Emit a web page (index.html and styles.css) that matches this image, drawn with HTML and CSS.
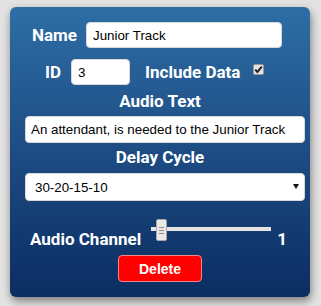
FILE: index.html
```html
<!DOCTYPE html>
<html>
<head>
<meta charset="utf-8">
<link rel="stylesheet" href="styles.css">
</head>
<body>
<div class="panel">
  <div class="row row-name">
    <span class="lbl">Name</span>
    <input class="field name-field" type="text" value="Junior Track">
  </div>
  <div class="row row-id">
    <span class="lbl">ID</span>
    <input class="field id-field" type="text" value="3">
    <span class="lbl include">Include Data</span>
    <span class="check"><svg width="9" height="9" viewBox="0 0 9 9"><path d="M1.2 4.6 L3.4 7 L7.8 1.6" fill="none" stroke="#222" stroke-width="2"/></svg></span>
  </div>
  <div class="lbl center t-audio">Audio Text</div>
  <input class="field wide" type="text" value="An attendant, is needed to the Junior Track">
  <div class="lbl center t-delay">Delay Cycle</div>
  <div class="select-wrap">
    <select class="field wide sel"><option>30-20-15-10</option></select>
    <svg class="arrow" width="6" height="5" viewBox="0 0 6 5"><path d="M0 0 H6 L3 5 Z" fill="#111"/></svg>
  </div>
  <div class="row row-channel">
    <span class="lbl">Audio Channel</span>
    <input class="slider" type="range" min="1" max="16" value="1">
    <span class="lbl val">1</span>
  </div>
  <button class="del">Delete</button>
</div>
</body>
</html>
```
FILE: styles.css
```css
html, body {
  margin: 0;
  padding: 0;
}
body {
  background: #e2e2e2;
  width: 321px;
  height: 306px;
  overflow: hidden;
}
.panel {
  margin: 7px 0 0 10px;
  width: 300px;
  height: 290px;
  box-sizing: border-box;
  border-radius: 6px;
  background: linear-gradient(to bottom, #2e6ea6 0%, #1d4c83 50%, #0b2d62 100%);
  box-shadow: 1px 4px 9px rgba(0, 0, 0, 0.45);
  padding-top: 15px;
  display: flex;
  flex-direction: column;
}
.lbl {
  font-family: Roboto, "Liberation Sans", sans-serif;
  font-weight: bold;
  font-size: 17px;
  line-height: 20px;
  color: #ffffff;
}
.center {
  text-align: center;
}
.row {
  display: flex;
  align-items: center;
}
.field {
  font-family: "Liberation Sans", Arial, sans-serif;
  font-size: 13.333px;
  color: #000;
  background: #fff;
  border: 1px solid #d8d8d8;
  border-radius: 4px;
  box-sizing: border-box;
  outline: none;
  margin: 0;
}
.row-name {
  height: 26px;
  padding-left: 22px;
}
.name-field {
  margin-left: 9px;
  width: 196px;
  height: 26px;
  padding: 0 6px;
}
.row-id {
  margin-top: 11px;
  height: 26px;
  padding-left: 35px;
}
.id-field {
  margin-left: 10px;
  width: 59px;
  height: 26px;
  padding: 0 6px;
}
.include {
  margin-left: 15px;
}
.check {
  margin-left: 13px;
  margin-top: -5px;
  width: 11px;
  height: 11px;
  box-sizing: border-box;
  background: #e4e4e4;
  border: 1px solid #9a9a9a;
  border-radius: 2px;
  display: flex;
  align-items: center;
  justify-content: center;
}
.t-audio {
  margin-top: 6px;
}
.wide {
  margin-left: 15px;
  width: 280px;
}
input.wide {
  margin-top: 5px;
  height: 27px;
  padding: 0 5px;
}
.t-delay {
  margin-top: 4px;
}
.select-wrap {
  position: relative;
  margin-top: 6px;
  height: 28px;
}
.sel {
  -webkit-appearance: none;
  appearance: none;
  height: 28px;
  padding: 0 0 0 9px;
}
.arrow {
  position: absolute;
  left: 283px;
  top: 11px;
}
.row-channel {
  margin-top: 17px;
  align-items: flex-start;
  height: 32px;
  padding-left: 20px;
}
.row-channel .lbl {
  margin-top: 11px;
}
.slider {
  -webkit-appearance: none;
  appearance: none;
  margin: 0 0 0 10px;
  width: 120px;
  height: 22px;
  background: transparent;
  outline: none;
}
.slider::-webkit-slider-runnable-track {
  height: 4px;
  background: #e6e2e2;
  border: none;
}
.slider::-webkit-slider-thumb {
  -webkit-appearance: none;
  appearance: none;
  width: 11px;
  height: 22px;
  margin-top: -8px;
  margin-left: 5px;
  box-sizing: border-box;
  border: 1px solid #a8a8a8;
  border-radius: 2px;
  background:
    linear-gradient(#8a8a8a, #8a8a8a) center 7px / 5px 1px no-repeat,
    linear-gradient(#8a8a8a, #8a8a8a) center 10px / 5px 1px no-repeat,
    linear-gradient(#8a8a8a, #8a8a8a) center 13px / 5px 1px no-repeat,
    #ece8e8;
}
.val {
  margin-left: 6px;
}
.del {
  margin: 5px 0 0 108px;
  width: 84px;
  height: 27px;
  background: #ff0000;
  border: 1px solid #f08a8a;
  border-radius: 4px;
  color: #ffffff;
  font-family: "Liberation Sans", Arial, sans-serif;
  font-weight: bold;
  font-size: 14px;
  padding: 0;
}
```
